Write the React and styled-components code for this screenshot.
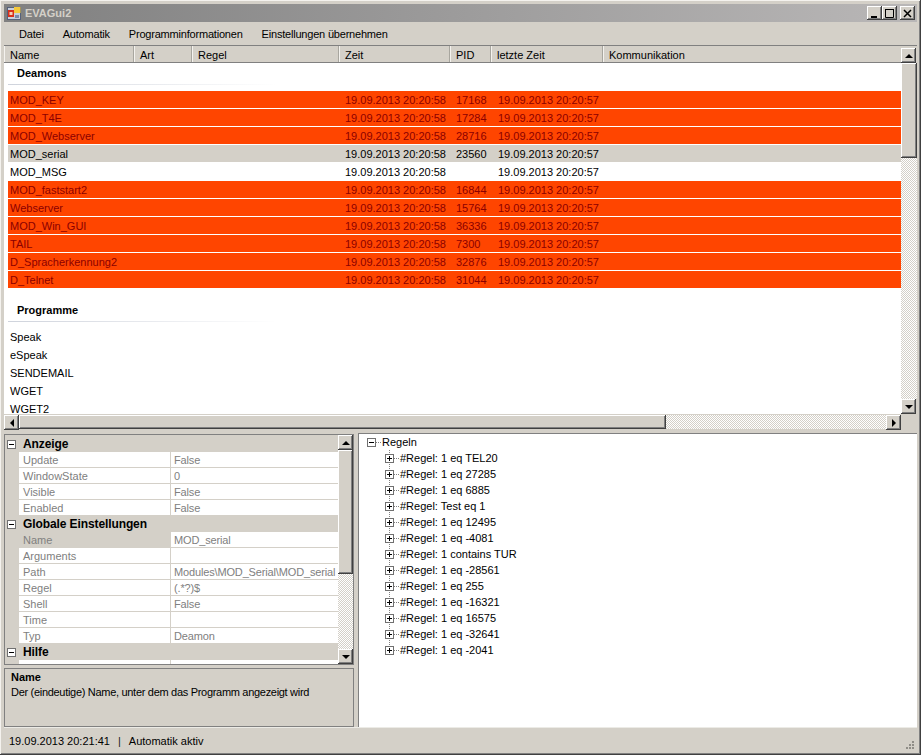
import styled, { createGlobalStyle } from 'styled-components';

const FACE = '#d4d0c8';
const SHADOW = '#808080';

const daemons = [
  { name: 'MOD_KEY', pid: '17168', state: 'error' },
  { name: 'MOD_T4E', pid: '17284', state: 'error' },
  { name: 'MOD_Webserver', pid: '28716', state: 'error' },
  { name: 'MOD_serial', pid: '23560', state: 'selected' },
  { name: 'MOD_MSG', pid: '', state: 'normal' },
  { name: 'MOD_faststart2', pid: '16844', state: 'error' },
  { name: 'Webserver', pid: '15764', state: 'error' },
  { name: 'MOD_Win_GUI', pid: '36336', state: 'error' },
  { name: 'TAIL', pid: '7300', state: 'error' },
  { name: 'D_Spracherkennung2', pid: '32876', state: 'error' },
  { name: 'D_Telnet', pid: '31044', state: 'error' },
];

const programs = ['Speak', 'eSpeak', 'SENDEMAIL', 'WGET', 'WGET2'];

const columns = ['Name', 'Art', 'Regel', 'Zeit', 'PID', 'letzte Zeit', 'Kommunikation'];

const properties = [
  {
    title: 'Anzeige',
    rows: [['Update', 'False'], ['WindowState', '0'], ['Visible', 'False'], ['Enabled', 'False']],
  },
  {
    title: 'Globale Einstellungen',
    rows: [
      ['Name', 'MOD_serial', true],
      ['Arguments', ''],
      ['Path', 'Modules\\MOD_Serial\\MOD_serial'],
      ['Regel', '(.*?)$'],
      ['Shell', 'False'],
      ['Time', ''],
      ['Typ', 'Deamon'],
    ],
  },
  { title: 'Hilfe', rows: [['', '']] },
];

const rules = ['1 eq TEL20', '1 eq 27285', '1 eq 6885', 'Test eq 1', '1 eq 12495', '1 eq -4081', '1 contains TUR', '1 eq -28561', '1 eq 255', '1 eq -16321', '1 eq 16575', '1 eq -32641', '1 eq -2041'];

const GlobalStyle = createGlobalStyle`
  html, body {
    margin: 0;
    padding: 0;
    background: ${FACE};
  }
  * {
    box-sizing: border-box;
  }
`;

const Window = styled.div`
  width: 921px;
  height: 755px;
  padding: 4px;
  display: flex;
  flex-direction: column;
  overflow: hidden;
  background: ${FACE};
  color: #000;
  font-family: "Liberation Sans", Arial, sans-serif;
  font-size: 11px;
  box-shadow: inset -1px -1px #404040, inset 1px 1px #f4f2ee, inset -2px -2px ${SHADOW};
`;

const TitleBar = styled.div`
  height: 18px;
  flex: none;
  display: flex;
  align-items: center;
  padding: 0 2px 0 3px;
  background: linear-gradient(to right, #808080, #b9b7b7);
`;

const TitleText = styled.span`
  margin-left: 4px;
  flex: 1;
  color: #d4d0c8;
  font-weight: bold;
  font-size: 11px;
`;

const CaptionButton = styled.div`
  width: 15px;
  height: 14px;
  margin-left: ${(p) => p.$gap || 0}px;
  display: flex;
  align-items: center;
  justify-content: center;
  background: ${FACE};
  box-shadow: inset -1px -1px #404040, inset 1px 1px #fff, inset -2px -2px ${SHADOW};
`;

const MenuBar = styled.div`
  height: 24px;
  flex: none;
  display: flex;
  align-items: center;
  padding: 1px 0 0 15px;
  gap: 19px;
  letter-spacing: -0.2px;
  border-bottom: 1px solid ${SHADOW};
`;

const MenuItem = styled.span`
  white-space: nowrap;
`;

const ListArea = styled.div`
  height: 385px;
  flex: none;
  display: grid;
  grid-template-columns: 1fr 16px;
  grid-template-rows: 368px 17px;
`;

const ListMain = styled.div`
  display: flex;
  flex-direction: column;
  min-width: 0;
  min-height: 0;
`;

const HeaderRow = styled.div`
  height: 17px;
  flex: none;
  display: grid;
  grid-template-columns: 130px 58px 147px 111px 41px 112px 1fr;
  background: ${FACE};
  border-bottom: 1px solid ${SHADOW};
`;

const HeaderCell = styled.div`
  display: flex;
  align-items: center;
  padding-left: 6px;
  padding-top: 2px;
  border-right: 1px solid #a8a69f;
  box-shadow: inset 1px 0 #f4f2ee;
  &:last-child {
    border-right: 0;
  }
`;

const ListBody = styled.div`
  flex: 1;
  min-height: 0;
  overflow: hidden;
  background: #fff;
  padding-left: 4px;
`;

const GroupHeading = styled.div`
  height: ${(p) => p.$height}px;
  padding: ${(p) => p.$top}px 0 0 9px;
  margin-bottom: ${(p) => p.$after}px;
  font-weight: bold;
  line-height: 14px;
  border-bottom: 1px solid transparent;
  border-image: linear-gradient(to right, #cfd3dc, #ffffff 270px) 1;
`;

const rowBg = { error: '#ff4500', selected: FACE, normal: '#fff' };

const Row = styled.div`
  height: 17px;
  margin-bottom: 1px;
  display: grid;
  grid-template-columns: 126px 58px 147px 111px 42px 112px 1fr;
  align-items: center;
  white-space: nowrap;
  background: ${(p) => rowBg[p.$state]};
  color: ${(p) => (p.$state === 'error' ? '#8b0000' : '#000')};
`;

const Cell = styled.span`
  padding-left: ${(p) => (p.$first ? 2 : 6)}px;
`;

const PlainRow = styled.div`
  height: 18px;
  padding-left: 2px;
  display: flex;
  align-items: center;
`;

const ScrollV = styled.div`
  display: flex;
  flex-direction: column;
  min-height: 0;
  padding-top: ${(p) => p.$pad || 0}px;
`;

const ScrollH = styled.div`
  display: flex;
  padding: 1px 0;
  border-bottom: 1px solid ${FACE};
`;

const ScrollButton = styled.div`
  width: 15px;
  height: 15px;
  flex: none;
  display: flex;
  align-items: center;
  justify-content: center;
  background: ${FACE};
  box-shadow: inset -1px -1px #404040, inset 1px 1px #fff, inset -2px -2px ${SHADOW};
`;

const Thumb = styled.div`
  flex: ${(p) => (p.$size ? `0 0 ${p.$size}px` : 1)};
  background: ${FACE};
  box-shadow: inset -1px -1px #404040, inset 1px 1px #fff, inset -2px -2px ${SHADOW};
`;

const Track = styled.div`
  flex: 1;
  min-width: 0;
  min-height: 0;
  background: repeating-conic-gradient(${FACE} 0 25%, #fff 0 50%) 0 0 / 2px 2px;
`;

const arrowShapes = {
  up: 'border-width: 0 4px 4px; border-color: transparent transparent #000;',
  down: 'border-width: 4px 4px 0; border-color: #000 transparent transparent;',
  left: 'border-width: 4px 4px 4px 0; border-color: transparent #000 transparent transparent;',
  right: 'border-width: 4px 0 4px 4px; border-color: transparent transparent transparent #000;',
};

const Arrow = styled.i`
  display: block;
  width: 0;
  height: 0;
  border-style: solid;
  ${(p) => arrowShapes[p.$dir]}
`;

const Corner = styled.div`
  background: ${FACE};
`;

const BottomArea = styled.div`
  height: 294px;
  flex: none;
  margin-top: 2px;
  display: flex;
  gap: 4px;
`;

const LeftColumn = styled.div`
  width: 350px;
  flex: none;
  display: flex;
  flex-direction: column;
  gap: 3px;
`;

const PropertyGrid = styled.div`
  height: 231px;
  flex: none;
  margin-top: 1px;
  display: flex;
  border: 1px solid ${SHADOW};
  background: ${FACE};
`;

const PropertyBody = styled.div`
  flex: 1;
  min-width: 0;
  overflow: hidden;
  padding-top: 1px;
`;

const Category = styled.div`
  height: 16px;
  display: flex;
  align-items: center;
  gap: 7px;
  padding-left: 2px;
  font-size: 12px;
  font-weight: bold;
  letter-spacing: -0.1px;
`;

const PropertyRow = styled.div`
  height: 16px;
  margin-left: 14px;
  display: grid;
  grid-template-columns: 152px 1fr;
  background: #fff;
  border-bottom: 1px solid ${FACE};
  color: ${SHADOW};
`;

const PropertyName = styled.div`
  padding-left: 4px;
  line-height: 16px;
  overflow: hidden;
  white-space: nowrap;
  background: ${(p) => (p.$selected ? FACE : 'transparent')};
  border-right: 1px solid ${FACE};
`;

const PropertyValue = styled.div`
  padding-left: 3px;
  line-height: 16px;
  letter-spacing: -0.15px;
  overflow: hidden;
  white-space: nowrap;
`;

const HelpBox = styled.div`
  height: 59px;
  flex: none;
  padding: 1px 6px;
  border: 1px solid ${SHADOW};
  line-height: 15px;
`;

const HelpTitle = styled.div`
  font-weight: bold;
`;

const HelpText = styled.div`
  letter-spacing: -0.3px;
  white-space: nowrap;
`;

const TreePanel = styled.div`
  flex: 1;
  min-width: 0;
  padding: 0 0 0 8px;
  background: #fff;
  border-top: 1px solid ${SHADOW};
  border-left: 1px solid ${SHADOW};
`;

const TreeRow = styled.div`
  height: 16px;
  display: flex;
  align-items: center;
  white-space: nowrap;
`;

const TreeChildren = styled.div`
  margin-left: 18px;
  background: repeating-linear-gradient(to bottom, #808080 0 1px, transparent 1px 2px) 4px 0 / 1px calc(100% - 8px) no-repeat;
`;

const Connector = styled.span`
  width: 5px;
  flex: none;
  margin: 0 1px 0 0;
  border-top: 1px dotted ${SHADOW};
`;

const StatusBar = styled.div`
  height: 24px;
  flex: none;
  display: flex;
  align-items: center;
  padding: 3px 2px 0 5px;
  border-top: 1px solid #ecebe6;
`;

const StatusText = styled.span`
  flex: 1;
  white-space: nowrap;
`;

const StatusSep = styled.span`
  margin: 0 8px;
  color: #222;
`;

const Expander = ({ open }) => (
  <svg width="9" height="9" viewBox="0 0 9 9" style={{ flex: 'none' }}>
    <rect x="0.5" y="0.5" width="8" height="8" fill="#fff" stroke="#707070" />
    <path d={open ? 'M2 4.5h5' : 'M2 4.5h5M4.5 2v5'} stroke="#000" />
  </svg>
);

const AppIcon = () => (
  <svg width="14" height="14" viewBox="0 0 14 14" style={{ flex: 'none' }}>
    <rect x="0.5" y="1.5" width="13" height="12" fill="#c8cfdc" stroke="#55617a" />
    <rect x="1" y="4" width="6" height="7" fill="#d8301c" />
    <rect x="2.5" y="6" width="3" height="3" fill="#f4d0b8" />
    <rect x="7" y="1" width="6.5" height="6" fill="#f5c93a" />
    <rect x="8" y="9" width="4" height="3" fill="#7c8aa8" />
  </svg>
);

const Grip = () => (
  <svg width="12" height="12" viewBox="0 0 12 12" style={{ flex: 'none', alignSelf: 'flex-end' }}>
    <path d="M9 2h2v2H9zM6 5h2v2H6zM9 5h2v2H9zM3 8h2v2H3zM6 8h2v2H6zM9 8h2v2H9z" fill="#8f8d87" />
  </svg>
);

const App = () => {
  return (
    <Window>
      <GlobalStyle />
      <TitleBar>
        <AppIcon />
        <TitleText>EVAGui2</TitleText>
        <CaptionButton>
          <svg width="9" height="9" viewBox="0 0 9 9"><path d="M1 7h6v2H1z" fill="#000" /></svg>
        </CaptionButton>
        <CaptionButton>
          <svg width="11" height="10" viewBox="0 0 11 10"><path d="M1.5 1.5h8v8h-8zM1 1.5h9" fill="none" stroke="#000" /></svg>
        </CaptionButton>
        <CaptionButton $gap={3}>
          <svg width="9" height="9" viewBox="0 0 9 9"><path d="M1 1l7 7M8 1l-7 7" stroke="#000" strokeWidth="1.5" /></svg>
        </CaptionButton>
      </TitleBar>

      <MenuBar>
        <MenuItem>Datei</MenuItem>
        <MenuItem>Automatik</MenuItem>
        <MenuItem>Programminformationen</MenuItem>
        <MenuItem>Einstellungen übernehmen</MenuItem>
      </MenuBar>

      <ListArea>
        <ListMain>
          <HeaderRow>
            {columns.map((c) => <HeaderCell key={c}>{c}</HeaderCell>)}
          </HeaderRow>
          <ListBody>
            <GroupHeading $height={22} $top={3} $after={6}>Deamons</GroupHeading>
            {daemons.map((d) => (
              <Row key={d.name} $state={d.state}>
                <Cell $first>{d.name}</Cell>
                <Cell />
                <Cell />
                <Cell>19.09.2013 20:20:58</Cell>
                <Cell>{d.pid}</Cell>
                <Cell>19.09.2013 20:20:57</Cell>
              </Row>
            ))}
            <GroupHeading $height={33} $top={14} $after={6}>Programme</GroupHeading>
            {programs.map((p) => <PlainRow key={p}>{p}</PlainRow>)}
          </ListBody>
        </ListMain>
        <ScrollV $pad={2}>
          <ScrollButton><Arrow $dir="up" /></ScrollButton>
          <Thumb $size={95} />
          <Track />
          <ScrollButton><Arrow $dir="down" /></ScrollButton>
        </ScrollV>
        <ScrollH>
          <ScrollButton><Arrow $dir="left" /></ScrollButton>
          <Thumb $size={647} />
          <Track />
          <ScrollButton><Arrow $dir="right" /></ScrollButton>
        </ScrollH>
        <Corner />
      </ListArea>

      <BottomArea>
        <LeftColumn>
          <PropertyGrid>
            <PropertyBody>
              {properties.map((group) => (
                <div key={group.title}>
                  <Category>
                    <Expander open />
                    <span>{group.title}</span>
                  </Category>
                  {group.rows.map(([name, value, selected], i) => (
                    <PropertyRow key={i}>
                      <PropertyName $selected={selected}>{name}</PropertyName>
                      <PropertyValue>{value}</PropertyValue>
                    </PropertyRow>
                  ))}
                </div>
              ))}
            </PropertyBody>
            <ScrollV>
              <ScrollButton><Arrow $dir="up" /></ScrollButton>
              <Thumb $size={124} />
              <Track />
              <ScrollButton><Arrow $dir="down" /></ScrollButton>
            </ScrollV>
          </PropertyGrid>
          <HelpBox>
            <HelpTitle>Name</HelpTitle>
            <HelpText>Der (eindeutige) Name, unter dem das Programm angezeigt wird</HelpText>
          </HelpBox>
        </LeftColumn>

        <TreePanel>
          <TreeRow>
            <Expander open />
            <Connector />
            <span>Regeln</span>
          </TreeRow>
          <TreeChildren>
            {rules.map((r, i) => (
              <TreeRow key={i}>
                <Expander />
                <Connector />
                <span>#Regel: {r}</span>
              </TreeRow>
            ))}
          </TreeChildren>
        </TreePanel>
      </BottomArea>

      <StatusBar>
        <StatusText>19.09.2013 20:21:41<StatusSep>|</StatusSep>Automatik aktiv</StatusText>
        <Grip />
      </StatusBar>
    </Window>
  );
};

export default App;
